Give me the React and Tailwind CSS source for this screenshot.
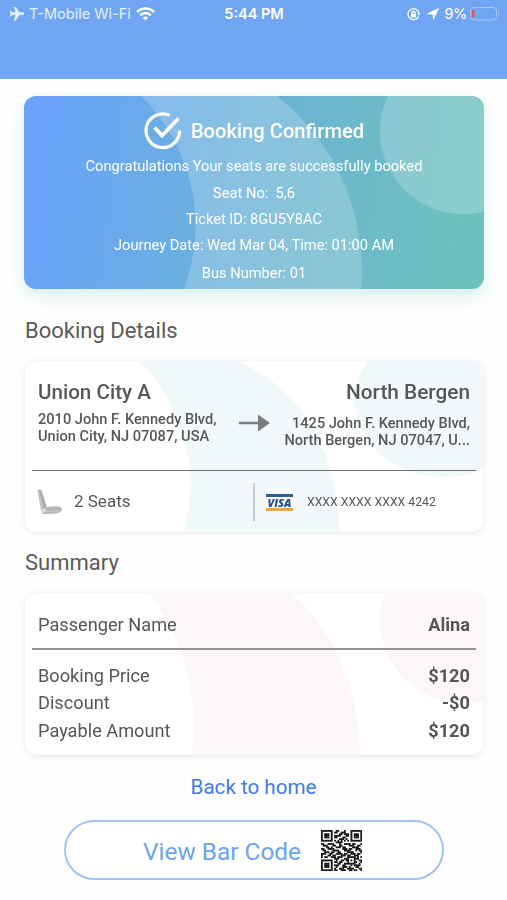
import React from "react";

const qrRows = [
  "1111111001100010001111111",
  "1000001011001110001000001",
  "1011101000011011101011101",
  "1011101011110001101011101",
  "1011101011000110001011101",
  "1000001000011101001000001",
  "1111111010101010101111111",
  "0000000001111000000000000",
  "1100111100010011110110001",
  "0111000110011000011100110",
  "0001101001110110000111100",
  "1100111100000111011001110",
  "0110000111100011110001011",
  "0011101100110000111100001",
  "1110011001111011001110110",
  "1000110110001110110011100",
  "1011001110111000111110101",
  "0000000011100011100011100",
  "1111111001001101101010011",
  "1000001011011000100011001",
  "1011101000110011111110010",
  "1011101011100110001011110",
  "1011101001000111010001100",
  "1000001010011100111100011",
  "1111111011001110011011001",
];

const prices = [
  { label: "Booking Price", value: "$120" },
  { label: "Discount", value: "-$0" },
  { label: "Payable Amount", value: "$120" },
];

function StatusBar() {
  return (
    <header className="h-[79px] bg-[#6fa5f3] text-white font-['Inter',sans-serif]">
      <div className="grid h-7 grid-cols-[1fr_auto_1fr] items-center pl-[10px] pr-[9px]">
        <div className="flex items-center text-[#e6f1ff]">
          <svg className="mr-[5px] h-[14px] w-[14px] rotate-90" viewBox="2 2 20 20" fill="currentColor" stroke="currentColor">
            <path d="M21 16v-2l-8-5V3.5a1.5 1.5 0 0 0-3 0V9l-8 5v2l8-2.500V19l-2 1.500V22l3.500-1 3.500 1v-1.500L13 19v-5.500z" />
          </svg>
          <span className="text-[14.500px] leading-5">T-Mobile Wi-Fi</span>
          <svg className="ml-[5px] h-[14px] w-[19px]" viewBox="0 0 19 14" fill="none" stroke="white" strokeWidth="2.500">
            <path d="M1 5a12 12 0 0 1 17 0" />
            <path d="M4.200 8.300a7.500 7.500 0 0 1 10.600 0" />
            <path d="M9.500 13.500 6.800 10.800a3.800 3.800 0 0 1 5.400 0z" fill="white" stroke="none" />
          </svg>
        </div>
        <span className="text-[14.500px] font-semibold leading-5">5:44 PM</span>
        <div className="-mr-[2px] flex items-center justify-end">
          <svg className="mr-[7px] h-[13px] w-[13px]" viewBox="0 0 13 13" fill="none" stroke="white" strokeWidth="1.300">
            <path d="M11.500 8.500A5.500 5.500 0 1 1 12 6" />
            <path d="M10.400 5.500h3l-1.500 2z" fill="white" stroke="none" />
            <rect x="4" y="6" width="5" height="3.500" rx="0.500" fill="white" stroke="none" />
            <path d="M5 6V5a1.500 1.500 0 0 1 3 0v1" />
          </svg>
          <svg className="mr-[5px] h-[12px] w-[12px]" viewBox="0 0 12 12" fill="white" stroke="white" strokeWidth="0.800" strokeLinejoin="round">
            <path d="M11.400.6.6 5.800l5.400.400.400 5.200z" />
          </svg>
          <span className="mr-[3px] text-[14.500px] leading-5 tracking-tight">9%</span>
          <svg className="h-[14px] w-[30px]" viewBox="0 0 30 14" fill="none">
            <rect x="0.500" y="0.500" width="26" height="12.500" rx="3.500" stroke="#a5c8fb" />
            <rect x="2" y="3" width="2.500" height="7.500" fill="#d9555b" />
            <path d="M28 4.500v4.500q2-2.200 0-4.500z" fill="#a5c8fb" />
          </svg>
        </div>
      </div>
    </header>
  );
}

function ConfirmedCard() {
  return (
    <section className="relative ml-[24px] mr-[23px] mt-[17px] h-[193px] overflow-hidden rounded-[12px] bg-[linear-gradient(98deg,#6aa3f8_6%,#6aaee2_35%,#6cb8cc_66%,#6dc1bc_95%)] text-center text-white">
      <svg className="absolute inset-0 h-full w-full" viewBox="24 96 460 193" fill="white" fillOpacity="0.2">
        <path d="M141 96A181 181 0 0 1 184 289H361A222 222 0 0 0 277 96z" />
        <circle cx="463" cy="131" r="83" />
      </svg>
      <div className="relative">
        <div className="flex h-[58px] items-center justify-center pt-[11px]">
          <svg className="mr-[9px] h-[38px] w-[38px]" viewBox="0 0 38 38" fill="none" stroke="white" strokeWidth="3.200">
            <path d="M25.500 3.300A16.800 16.800 0 1 0 35.600 18.500" />
            <path d="M10.500 15.500 18 23.500 34.500 6.500" strokeWidth="3.800" />
          </svg>
          <h1 className="text-[20.150px] font-medium leading-6">Booking Confirmed</h1>
        </div>
        <p className="h-[25.500px] text-[14.650px] leading-[25px]">Congratulations Your seats are successfully booked</p>
        <p className="h-[26px] whitespace-pre text-[14.650px] leading-[26px]">Seat No:  5,6</p>
        <p className="h-[26px] text-[14.650px] leading-[26px]">Ticket ID: 8GU5Y8AC</p>
        <p className="h-[26px] text-[14.650px] leading-[26px]">Journey Date: Wed Mar 04, Time: 01:00 AM</p>
        <p className="h-[30px] text-[14.650px] leading-[30px]">Bus Number: 01</p>
      </div>
    </section>
  );
}

function Seat() {
  return (
    <svg className="h-[26px] w-[26px]" viewBox="0 0 26 26">
      <path d="M.5 1.500Q2-.5 4.500 1.500L9.500 17l-1 5-4-1z" fill="#a7abac" />
      <path d="M.5 1.500 2 0l5 20-3 1z" fill="#bfc4c5" />
      <path d="M5 19Q14 16.500 22 17.500q4 1 2.500 4.500-2 2.500-7 2.500l-11 .5q-3-1-1.500-6z" fill="#b1b5b6" />
      <path d="M8 22q8 1 15.500-1" fill="none" stroke="#c9cdce" />
      <circle cx="7" cy="21.500" r="2.200" fill="#d7dadb" />
    </svg>
  );
}

function DetailsCard() {
  return (
    <section className="relative ml-[25px] mr-[24px] h-[171px] overflow-hidden rounded-[12px] bg-white text-[#555758]">
      <svg className="absolute inset-0 h-full w-full" viewBox="25 361 458 171" fill="#f1f8f9">
        <path d="M139 361C158 380 171 400 177 420Q200 470 184 532H339C338 450 303 390 237 361z" />
        <ellipse cx="444" cy="400" rx="89" ry="77" />
      </svg>
      <div className="relative flex h-[109px] px-[13px] pt-[18px]">
        <div className="w-[201px] whitespace-nowrap">
          <h3 className="text-[20.600px] font-medium leading-[26px]">Union City A</h3>
          <p className="mt-[6px] text-[14.600px] font-medium leading-[17px]">
            2010 John F. Kennedy Blvd,
            <br />
            Union City, NJ 07087, USA
          </p>
        </div>
        <svg className="mt-[35px] h-[18px] w-[31px] shrink-0" viewBox="0 0 31 18" fill="#7a7d7e">
          <path d="M0 7.700h19V.5L31 9 19 17.500V10.300H0z" />
        </svg>
        <div className="flex-1 whitespace-nowrap text-right">
          <h3 className="text-[20.800px] font-medium leading-[26px]">North Bergen</h3>
          <p className="mt-[10px] text-[14.550px] font-medium leading-[17px]">
            1425 John F. Kennedy Blvd,
            <br />
            North Bergen, NJ 07047, U...
          </p>
        </div>
      </div>
      <div className="relative mx-[7px] h-px bg-[#6b7070]" />
      <div className="relative flex h-[61px] items-center pl-[12px] pt-[1px]">
        <Seat />
        <span className="ml-[11px] w-[179px] text-[17px]">2 Seats</span>
        <div className="h-[38px] w-[2px] bg-[#c6cacc]" />
        <div className="ml-[7px] flex h-[27px] w-[35px] items-center justify-center bg-[#f7f8f9]">
          <div className="flex h-[17px] w-[27px] flex-col border-t-[3px] border-b-[3px] border-t-[#315b92] border-b-[#f2a53d] bg-white">
            <span className="text-center text-[11px] font-extrabold italic leading-[11px] text-[#234f91] font-['Open_Sans',sans-serif]">VISA</span>
          </div>
        </div>
        <span className="ml-[10px] text-[12.250px]">XXXX XXXX XXXX 4242</span>
      </div>
    </section>
  );
}

function SummaryCard() {
  return (
    <section className="relative ml-[25px] mr-[24px] h-[162px] overflow-hidden rounded-[12px] bg-white text-[18.200px] text-[#555]">
      <svg className="absolute inset-0 h-full w-full" viewBox="25 593 458 162" fill="#fcf6f6">
        <path d="M150 593Q204 670 191 755H360C359 690 337 635 291 593z" />
        <circle cx="463" cy="620" r="83" />
      </svg>
      <div className="relative flex h-[55px] items-center justify-between px-[13px] pt-[8px]">
        <span>Passenger Name</span>
        <span className="font-bold">Alina</span>
      </div>
      <div className="relative mx-[7px] h-[2px] bg-[#969292]" />
      <div className="relative px-[13px] pt-[12px]">
        {prices.map((row) => (
          <div key={row.label} className="flex h-[27.300px] items-center justify-between">
            <span>{row.label}</span>
            <span className="font-bold">{row.value}</span>
          </div>
        ))}
      </div>
    </section>
  );
}

function QrCode() {
  return (
    <svg className="h-[41px] w-[41px]" viewBox="0 0 25 25" fill="#0c0c0c">
      {qrRows.map((row, y) =>
        row.split("").map((cell, x) =>
          cell === "1" ? <rect key={`${x}-${y}`} x={x} y={y} width="1.1" height="1.1" /> : null
        )
      )}
    </svg>
  );
}

export default function App() {
  return (
    <div className="h-[900px] w-[507px] overflow-hidden bg-[#fefefe] font-['Roboto',sans-serif]">
      <StatusBar />
      <main>
        <div className="drop-shadow-[0_7px_8px_rgba(109,193,188,0.25)]">
          <ConfirmedCard />
        </div>
        <h2 className="ml-[25px] mt-[26px] h-[46px] text-[22px] leading-[31px] text-[#5a5a5a]">Booking Details</h2>
        <div className="drop-shadow-[0_1px_3px_rgba(0,0,0,0.09)]">
          <DetailsCard />
        </div>
        <h2 className="ml-[25px] mt-[15px] h-[46px] text-[22px] leading-[31px] text-[#5a5a5a]">Summary</h2>
        <div className="drop-shadow-[0_1px_3px_rgba(0,0,0,0.09)]">
          <SummaryCard />
        </div>
        <div className="mt-[19px] text-center text-[20.600px] leading-[26px] text-[#3f7bea]">
          <button>Back to home</button>
        </div>
        <button className="mx-auto mt-[20px] flex h-[60px] w-[380px] items-center justify-center rounded-full border-2 border-[#a0c2f6] bg-white pr-[2px]">
          <span className="mr-[20px] pt-[4px] text-[24.400px] text-[#6ba3f2]">View Bar Code</span>
          <QrCode />
        </button>
      </main>
    </div>
  );
}
